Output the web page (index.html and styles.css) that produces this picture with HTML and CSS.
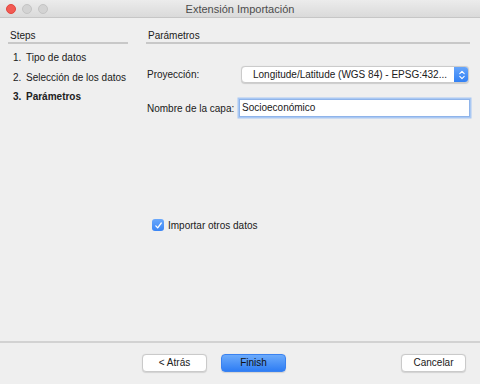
FILE: index.html
```html
<!DOCTYPE html>
<html>
<head>
<meta charset="utf-8">
<link rel="stylesheet" href="styles.css">
</head>
<body>
<div class="window">
  <div class="titlebar">
    <div class="lights">
      <span class="light red"></span>
      <span class="light gray"></span>
      <span class="light gray"></span>
    </div>
    <div class="title">Extensión Importación</div>
  </div>
  <div class="main">
    <aside class="steps">
      <div class="section-head">Steps</div>
      <ol class="step-list">
        <li><span class="num">1.</span>Tipo de datos</li>
        <li><span class="num">2.</span>Selección de los datos</li>
        <li class="current"><span class="num">3.</span>Parámetros</li>
      </ol>
    </aside>
    <section class="content">
      <div class="section-head">Parámetros</div>
      <div class="form">
        <div class="row row-select">
          <label class="lbl">Proyección:</label>
          <div class="select">
            <span class="select-text">Longitude/Latitude (WGS 84) - EPSG:432...</span>
            <span class="stepper">
              <svg width="8" height="12" viewBox="0 0 8 12"><path d="M1.8 4.6 L4 2.4 L6.2 4.6 M1.8 7.4 L4 9.6 L6.2 7.4" fill="none" stroke="#fff" stroke-width="1.1" stroke-linecap="round" stroke-linejoin="round"/></svg>
            </span>
          </div>
        </div>
        <div class="row row-input">
          <label class="lbl">Nombre de la capa:</label>
          <div class="input">Socioeconómico</div>
        </div>
      </div>
      <div class="check-row">
        <span class="checkbox">
          <svg width="9" height="9" viewBox="0 0 9 9"><path d="M1.8 4.9 L3.7 6.9 L7.3 2" fill="none" stroke="#fff" stroke-width="1.3" stroke-linecap="round" stroke-linejoin="round"/></svg>
        </span>
        <span class="check-label">Importar otros datos</span>
      </div>
    </section>
  </div>
  <div class="footer">
    <div class="btn">&lt; Atrás</div>
    <div class="btn primary">Finish</div>
    <div class="spacer"></div>
    <div class="btn">Cancelar</div>
  </div>
</div>
</body>
</html>
```
FILE: styles.css
```css
* { box-sizing: border-box; }
html, body { margin: 0; padding: 0; }
body {
  width: 480px;
  height: 384px;
  background: #efefef;
  font-family: "Liberation Sans", Arial, sans-serif;
  font-size: 10px;
  color: #202020;
  overflow: hidden;
  white-space: nowrap;
}
.window {
  width: 480px;
  height: 384px;
  display: flex;
  flex-direction: column;
  background: #efefef;
}
.titlebar {
  height: 18px;
  flex-shrink: 0;
  display: flex;
  align-items: center;
  position: relative;
  background: linear-gradient(#ececec, #dadada);
  border-bottom: 1px solid #c6c6c6;
}
.lights {
  display: flex;
  gap: 6px;
  padding-left: 6px;
}
.light {
  width: 10px;
  height: 10px;
  border-radius: 50%;
  display: block;
}
.light.red { background: #f25a53; border: 1px solid #e2463e; }
.light.gray { background: #d3d3d3; border: 1px solid #c4c4c4; }
.title {
  position: absolute;
  left: 0;
  right: 0;
  text-align: center;
  font-size: 11px;
  color: #4c4c4c;
}
.main {
  flex: 1;
  display: flex;
  padding: 12px 10px 0 8px;
  gap: 18px;
}
.steps {
  width: 120px;
  flex-shrink: 0;
}
.section-head {
  padding-left: 2px;
  height: 14px;
  line-height: 12px;
  border-bottom: 2px solid #c8c8c8;
}
.step-list {
  list-style: none;
  margin: 0;
  padding: 4px 0 0 5px;
}
.step-list li {
  height: 19.5px;
  line-height: 19.5px;
}
.step-list .num {
  display: inline-block;
  width: 13px;
}
.step-list li.current {
  font-weight: bold;
}
.content {
  flex: 1;
  min-width: 0;
}
.form {
  padding-top: 22px;
  padding-left: 1px;
}
.row {
  display: flex;
  align-items: center;
}
.lbl {
  display: block;
  flex-shrink: 0;
}
.row-select { height: 17px; }
.row-select .lbl { width: 94px; }
.select {
  width: 228px;
  height: 17px;
  display: flex;
  align-items: center;
  background: #fff;
  border: 1px solid #cbcbcb;
  border-radius: 4px;
  box-shadow: 0 0.5px 1px rgba(0,0,0,0.15);
  overflow: hidden;
}
.select-text {
  flex: 1;
  padding-left: 11px;
}
.stepper {
  width: 15px;
  height: 17px;
  margin-right: -1px;
  background: linear-gradient(#6aa8fb, #2f7ef4);
  display: flex;
  align-items: center;
  justify-content: center;
  border-radius: 0 4px 4px 0;
}
.row-input {
  margin-top: 16px;
  height: 18px;
}
.row-input .lbl { width: 92px; }
.input {
  width: 231px;
  height: 18px;
  line-height: 16px;
  background: #fff;
  border: 1px solid #8fb4ea;
  box-shadow: 0 0 0 1.5px #a9c8f3;
  padding: 0 2px;
}
.check-row {
  display: flex;
  align-items: center;
  margin-top: 102px;
  padding-left: 6px;
  gap: 4px;
}
.checkbox {
  width: 12px;
  height: 12px;
  border-radius: 3px;
  background: linear-gradient(#6aa8fb, #3a85f5);
  display: flex;
  align-items: center;
  justify-content: center;
}
.footer {
  height: 43px;
  flex-shrink: 0;
  border-top: 2px solid #d2d2d2;
  display: flex;
  align-items: center;
  padding: 0 14px 2px 142px;
  gap: 14px;
}
.spacer { flex: 1; }
.btn {
  width: 65px;
  height: 18px;
  line-height: 16px;
  text-align: center;
  background: #fff;
  border: 1px solid #cacaca;
  border-radius: 4px;
  box-shadow: 0 0.5px 1px rgba(0,0,0,0.12);
}
.btn.primary {
  background: linear-gradient(#6cabfb, #2e7df4);
  border-color: #3a82f0;
  color: #111;
}
```
